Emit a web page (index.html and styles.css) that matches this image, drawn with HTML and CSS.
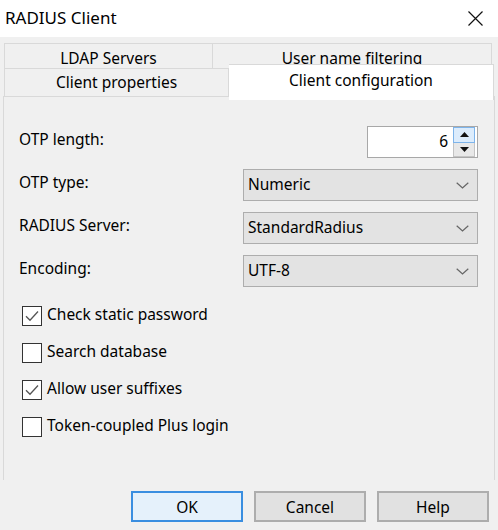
FILE: index.html
```html
<!DOCTYPE html>
<html lang="en">
<head>
<meta charset="utf-8">
<title>RADIUS Client</title>
<link rel="stylesheet" href="styles.css">
</head>
<body>
<div class="dialog">
  <div class="titlebar">
    <span class="title">RADIUS Client</span>
    <svg class="close" width="15" height="15" viewBox="0 0 15 15" aria-label="Close">
      <path d="M0.5 0.5L14.5 14.5M14.5 0.5L0.5 14.5"/>
    </svg>
  </div>

  <div class="tabs">
    <div class="tab-row back">
      <div class="tab tab-ldap">LDAP Servers</div>
      <div class="tab tab-filter">User name filtering</div>
    </div>
    <div class="tab-row front">
      <div class="tab tab-props">Client properties</div>
      <div class="tab tab-config selected">Client configuration</div>
    </div>
  </div>

  <div class="panel">
    <div class="fields">
      <div class="field">
        <span class="label">OTP length:</span>
        <div class="spin">
          <span class="spin-value">6</span>
          <div class="spin-buttons">
            <span class="spin-btn up"><svg width="9" height="5" viewBox="0 0 9 5"><path d="M0 5L4.5 0L9 5Z"/></svg></span>
            <span class="spin-btn down"><svg width="9" height="5" viewBox="0 0 9 5"><path d="M0 0L4.5 5L9 0Z"/></svg></span>
          </div>
        </div>
      </div>
      <div class="field">
        <span class="label">OTP type:</span>
        <div class="combo"><span>Numeric</span><svg class="chevron" width="13" height="7" viewBox="0 0 13 7"><path d="M0.7 0.7L6.5 6L12.3 0.7"/></svg></div>
      </div>
      <div class="field">
        <span class="label">RADIUS Server:</span>
        <div class="combo"><span>StandardRadius</span><svg class="chevron" width="13" height="7" viewBox="0 0 13 7"><path d="M0.7 0.7L6.5 6L12.3 0.7"/></svg></div>
      </div>
      <div class="field">
        <span class="label">Encoding:</span>
        <div class="combo"><span>UTF-8</span><svg class="chevron" width="13" height="7" viewBox="0 0 13 7"><path d="M0.7 0.7L6.5 6L12.3 0.7"/></svg></div>
      </div>
    </div>

    <div class="checks">
      <div class="check">
        <span class="box"><svg width="18" height="18" viewBox="0 0 18 18"><path d="M3 9.2L7 13.2L15 4.5"/></svg></span>
        <span>Check static password</span>
      </div>
      <div class="check">
        <span class="box"></span>
        <span>Search database</span>
      </div>
      <div class="check">
        <span class="box"><svg width="18" height="18" viewBox="0 0 18 18"><path d="M3 9.2L7 13.2L15 4.5"/></svg></span>
        <span>Allow user suffixes</span>
      </div>
      <div class="check">
        <span class="box"></span>
        <span>Token-coupled Plus login</span>
      </div>
    </div>
  </div>

  <div class="buttons">
    <span class="btn default">OK</span>
    <span class="btn">Cancel</span>
    <span class="btn">Help</span>
  </div>
</div>
</body>
</html>
```

FILE: styles.css
```css
html, body {
  margin: 0;
  padding: 0;
  background: #f0f0f0;
}

body {
  font-family: "Noto Sans", "Open Sans", sans-serif;
  font-size: 15.5px;
  color: #000;
}

.dialog {
  width: 498px;
  height: 530px;
  background: #f0f0f0;
  display: flex;
  flex-direction: column;
  overflow: hidden;
}

/* window caption */
.titlebar {
  height: 37px;
  flex: none;
  background: #fff;
  display: flex;
  align-items: center;
  justify-content: space-between;
  padding: 0 15px 0 5px;
  box-sizing: border-box;
}

.title {
  font-size: 17px;
  line-height: 20px;
  margin-top: -2px;
}

.close path {
  stroke: #111;
  stroke-width: 1.2;
  fill: none;
}

/* two rows of tabs */
.tabs {
  margin-top: 6px;
  padding-left: 4px;
  flex: none;
}

.tab-row {
  display: flex;
  align-items: flex-start;
}

.tab {
  box-sizing: border-box;
  border: 1px solid #d9d9d9;
  background: #f0f0f0;
  text-align: center;
  font-size: 15.5px;
  line-height: 20px;
  white-space: nowrap;
}

.back {
  width: 488px;
}

.back .tab {
  height: 25px;
  border-bottom: none;
  overflow: hidden;
  padding-top: 4px;
}

.tab-ldap {
  width: 209px;
}

.tab-filter {
  flex: 1;
  border-left: none !important;
}

.front .tab {
  height: 28px;
  border-bottom: none;
  padding-top: 3px;
}

.tab-props {
  width: 225px;
}

.tab.selected {
  width: 265px;
  height: 36px;
  margin-top: -4px;
  margin-bottom: -8px;
  background: #fff;
  border-left: none;
  padding-top: 5px;
  position: relative;
  z-index: 1;
}

/* tab page */
.panel {
  margin-left: 3px;
  width: 492px;
  height: 384px;
  box-sizing: border-box;
  border: 1px solid #d9d9d9;
  border-bottom: none;
  padding: 29px 16px 0 15px;
  flex: none;
}

.fields {
  display: flex;
  flex-direction: column;
  gap: 11px;
}

.field {
  height: 32px;
  display: flex;
  align-items: center;
  justify-content: space-between;
}

.label {
  margin-top: -6px;
}

.spin {
  width: 111px;
  height: 32px;
  box-sizing: border-box;
  border: 1px solid #a8a8a8;
  background: #fff;
  display: flex;
  align-items: center;
  justify-content: flex-end;
  padding-right: 2px;
}

.spin-value {
  margin-right: 5px;
  margin-top: -2px;
}

.spin-buttons {
  width: 22px;
  height: 30px;
  display: flex;
  flex-direction: column;
}

.spin-btn {
  flex: 1;
  display: flex;
  align-items: center;
  justify-content: center;
  box-sizing: border-box;
}

.spin-btn.up {
  background: #dcecfc;
  border: 1px solid #7eb4ea;
}

.spin-btn.down {
  background: #e8e8e8;
  border: 1px solid #c4c4c4;
  border-top: none;
}

.spin-btn path {
  fill: #111;
}

.combo {
  width: 235px;
  height: 32px;
  box-sizing: border-box;
  border: 1px solid #adadad;
  background: #e3e3e3;
  display: flex;
  align-items: center;
  justify-content: space-between;
  padding: 0 8px 0 4px;
}

.combo span {
  margin-top: -3px;
}

.chevron path {
  fill: none;
  stroke: #666;
  stroke-width: 1.2;
}

/* check boxes */
.checks {
  margin-top: 10px;
  display: flex;
  flex-direction: column;
}

.check {
  height: 37px;
  display: flex;
  align-items: center;
  gap: 5px;
  padding-left: 3px;
}

.check > span:last-child {
  margin-top: -4px;
}

.box {
  width: 20px;
  height: 20px;
  box-sizing: border-box;
  border: 1px solid #333;
  background: #fff;
  display: flex;
  align-items: center;
  justify-content: center;
}

.box path {
  fill: none;
  stroke: #555;
  stroke-width: 1.3;
}

/* dialog buttons */
.buttons {
  margin-top: 11px;
  display: flex;
  justify-content: flex-end;
  gap: 11px;
  padding-right: 9px;
}

.btn {
  width: 112px;
  height: 31px;
  box-sizing: border-box;
  border: 2px solid #adadad;
  background: #e1e1e1;
  display: flex;
  align-items: center;
  justify-content: center;
  font-size: 15.5px;
}

.btn.default {
  border-color: #3a8ee0;
  background: #e5f1fb;
}
```
